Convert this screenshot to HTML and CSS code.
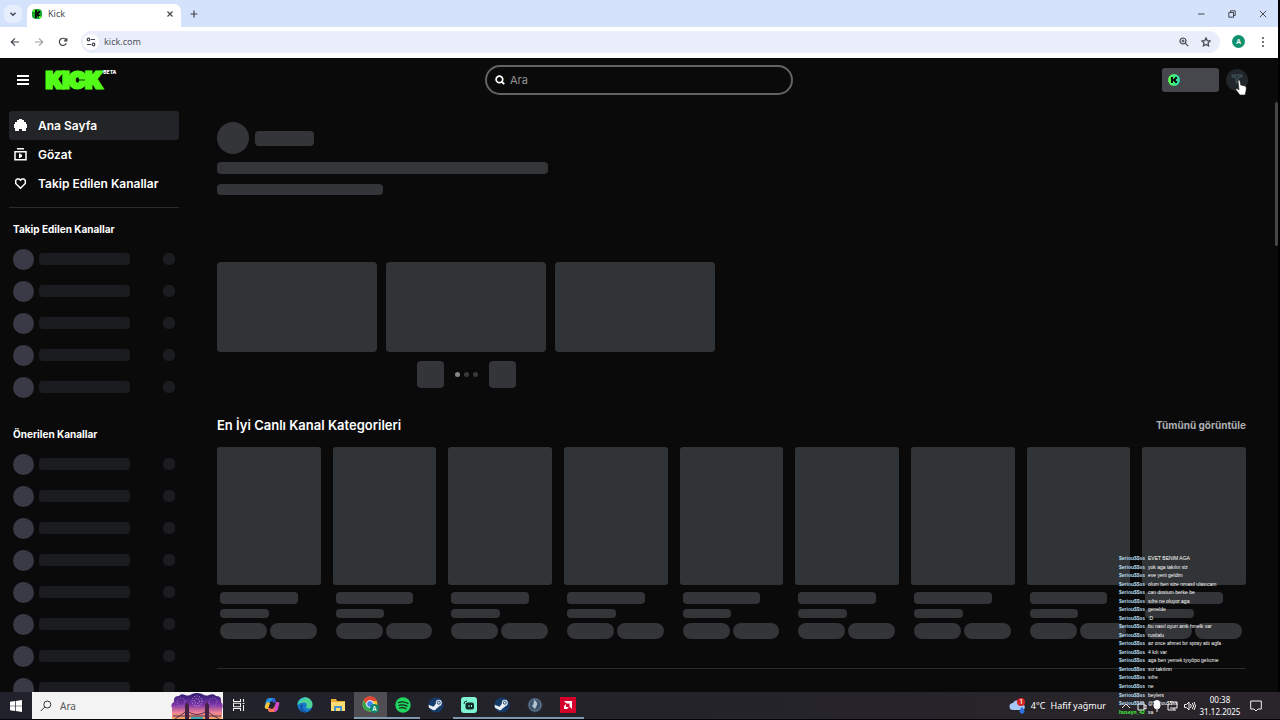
FILE: index.html
```html
<!DOCTYPE html>
<html lang="tr">
<head>
<meta charset="utf-8">
<title>Kick</title>
<link rel="stylesheet" href="styles.css">
</head>
<body>
<div class="tabstrip">
  <button class="tab-search" aria-label="Sekmelerde ara"><svg width="8" height="8" viewBox="0 0 8 8"><path d="M1.5 2.7 4 5.2 6.500 2.700" class="line bold"/></svg></button>
  <div class="tab">
    <svg width="10" height="10" viewBox="0 0 10 10"><rect width="10" height="10" rx="4" fill="#14a52c"/><path d="M3 1h2v2h1V2h2v2H7v2h1v2H6V7H5v2H3z" fill="#061208"/><path d="M1 1h2v2H1zM7 7h2v2H7z" fill="#53fc18"/></svg>
    <span class="tab-title">Kick</span>
    <button class="icon-btn tab-close" aria-label="Sekmeyi kapat"><svg width="8" height="8" viewBox="0 0 8 8"><path d="m1.500 1.500 5 5m0-5-5 5" class="line"/></svg></button>
  </div>
  <button class="icon-btn new-tab" aria-label="Yeni sekme"><svg width="8" height="8" viewBox="0 0 8 8"><path d="M4 .5v7M.5 4h7" class="line"/></svg></button>
  <div class="window-buttons">
    <button class="icon-btn" aria-label="Küçült"><svg width="8" height="8" viewBox="0 0 8 8"><path d="M1 4h6.500" class="line thin"/></svg></button>
    <button class="icon-btn" aria-label="Geri yükle"><svg width="8" height="8" viewBox="0 0 8 8"><path d="M.8 2.500h4.700v4.700H.8zM2.500 2.300V.8h4.700v4.700H5.700" class="line thin"/></svg></button>
    <button class="icon-btn" aria-label="Kapat"><svg width="8" height="8" viewBox="0 0 8 8"><path d="m.8.8 6.400 6.400m0-6.400L.8 7.200" class="line thin"/></svg></button>
  </div>
</div>
<div class="toolbar">
  <button class="icon-btn" aria-label="Geri"><svg width="10" height="10" viewBox="0 0 10 10"><path d="M9 5H1.500M5 1.300 1.300 5 5 8.700" class="line"/></svg></button>
  <button class="icon-btn faded" aria-label="İleri"><svg width="10" height="10" viewBox="0 0 10 10"><path d="M1 5h7.500M5 1.300 8.700 5 5 8.700" class="line"/></svg></button>
  <button class="icon-btn" aria-label="Yenile"><svg width="10" height="10" viewBox="0 0 10 10"><path d="M8.300 6.200A3.600 3.600 0 1 1 7.700 2.500L8.700 3.600M8.800 1v2.800H6" class="line"/></svg></button>
  <div class="address">
    <button class="site-info" aria-label="Site bilgileri"><svg width="10" height="10" viewBox="0 0 10 10"><path d="M5 2.500h4M1 7.500h4" class="line"/><circle cx="2.500" cy="2.500" r="1.300" class="line"/><circle cx="7.500" cy="7.500" r="1.300" class="line"/></svg></button>
    <input class="url" type="text" value="kick.com" aria-label="Adres">
    <button class="icon-btn" aria-label="Yakınlaştır"><svg width="10" height="10" viewBox="0 0 10 10"><circle cx="4" cy="4" r="3" class="line"/><path d="m6.200 6.200 3 3M4 2.500v3M2.500 4h3" class="line"/></svg></button>
    <button class="icon-btn" aria-label="Yer işareti"><svg width="10" height="10" viewBox="0 0 10 10"><path d="m5 .9 1.250 2.700 2.950.35-2.200 2 .6 2.950L5 7.450 2.400 8.900 3 5.950l-2.200-2 2.950-.35z" class="line"/></svg></button>
  </div>
  <button class="profile" aria-label="Profil">A</button>
  <button class="icon-btn" aria-label="Menü"><svg width="10" height="12" viewBox="0 0 10 12"><g fill="#474a4f"><circle cx="5" cy="2" r="1"/><circle cx="5" cy="6" r="1"/><circle cx="5" cy="10" r="1"/></g></svg></button>
</div>

<div class="page">
  <header class="header">
    <div class="brand">
      <button class="icon-btn" aria-label="Menü"><svg width="12" height="10" viewBox="0 0 12 10"><path d="M0 0h12v2H0zM0 4h12v2H0zM0 8h12v2H0z" fill="#fff"/></svg></button>
      <a class="logo" href="#">KICK</a><span class="beta">BETA</span>
    </div>
    <label class="search">
      <svg width="10" height="10" viewBox="0 0 10 10"><circle cx="4.400" cy="4.400" r="3.300" fill="none" stroke="#fff" stroke-width="1.700"/><path d="m6.500 6.500 2.700 2.700" stroke="#fff" stroke-width="1.800"/></svg>
      <input type="search" placeholder="Ara" aria-label="Ara">
    </label>
    <div class="account">
      <button class="wallet" aria-label="Kick cüzdanı"><svg width="12" height="12" viewBox="0 0 12 12"><defs><linearGradient id="coin"><stop offset="0" stop-color="#5bff45"/><stop offset="1" stop-color="#25d4b1"/></linearGradient></defs><circle cx="6" cy="6" r="6" fill="url(#coin)"/><path d="M3 3h2v2h1V4h1V3h2v2H8v2h1v2H7V8H6V7H5v2H3z" fill="#07100a"/></svg></button>
      <button class="avatar" aria-label="Hesap"><svg width="12" height="12" viewBox="0 0 12 12"><path d="M1 1h10v2H8l-1 2v4H5V5L4 3H1z" fill="#27363c" stroke="#48565d"/></svg></button>
    </div>
  </header>
  <div class="content">
    <nav class="sidebar">
      <a class="nav-item current" href="#"><svg width="13" height="13" viewBox="0 0 13 13"><path d="M5 0h3v1h2v2h2v2h1v4h-1v3H8v-2H5v2H1V9H0V5h1V3h2V1h2z" fill="#fff"/></svg>Ana Sayfa</a>
      <a class="nav-item" href="#"><svg width="13" height="13" viewBox="0 0 13 13"><path d="M3 .8h7" stroke="#fff" stroke-width="1.500"/><path d="M1 3.800h11v8H1z" fill="none" stroke="#fff" stroke-width="1.500"/><path d="M5 5.500h1.500v1H8v2.500H6.500v1H5z" fill="#fff"/></svg>Gözat</a>
      <a class="nav-item" href="#"><svg width="13" height="13" viewBox="0 0 13 13"><path d="M6.500 11.300 1.700 6.500V3.300L3.200 1.900h1.900l1.400 1.400 1.400-1.400h1.900l1.500 1.400v3.200z" fill="none" stroke="#fff" stroke-width="1.500"/></svg>Takip Edilen Kanallar</a>
      <hr class="rule">
      <h2 class="side-title">Takip Edilen Kanallar</h2>
      <ul class="channels">
        <li><i></i><b></b><s></s></li><li><i></i><b></b><s></s></li><li><i></i><b></b><s></s></li><li><i></i><b></b><s></s></li><li><i></i><b></b><s></s></li>
      </ul>
      <h2 class="side-title second">Önerilen Kanallar</h2>
      <ul class="channels">
        <li><i></i><b></b><s></s></li><li><i></i><b></b><s></s></li><li><i></i><b></b><s></s></li><li><i></i><b></b><s></s></li><li><i></i><b></b><s></s></li><li><i></i><b></b><s></s></li><li><i></i><b></b><s></s></li><li><i></i><b></b><s></s></li>
      </ul>
    </nav>
    <main class="main">
      <section class="featured">
        <div class="streamer"><div class="bone round"></div><div class="bone name"></div></div>
        <div class="bone headline"></div>
        <div class="bone subline"></div>
        <div class="slides"><div class="bone"></div><div class="bone"></div><div class="bone"></div></div>
        <div class="pager"><button class="bone" aria-label="Önceki"></button><span class="dots"><i class="on"></i><i></i><i></i></span><button class="bone" aria-label="Sonraki"></button></div>
      </section>
      <section>
        <div class="section-head"><h1>En İyi Canlı Kanal Kategorileri</h1><a href="#">Tümünü görüntüle</a></div>
        <div class="categories">
          <div class="category"><div class="bone cover"></div><div class="bone title"></div><div class="bone views"></div><div class="tags"><i class="bone"></i><i class="bone"></i></div></div>
          <div class="category"><div class="bone cover"></div><div class="bone title"></div><div class="bone views"></div><div class="tags"><i class="bone"></i><i class="bone"></i></div></div>
          <div class="category"><div class="bone cover"></div><div class="bone title"></div><div class="bone views"></div><div class="tags"><i class="bone"></i><i class="bone"></i></div></div>
          <div class="category"><div class="bone cover"></div><div class="bone title"></div><div class="bone views"></div><div class="tags"><i class="bone"></i><i class="bone"></i></div></div>
          <div class="category"><div class="bone cover"></div><div class="bone title"></div><div class="bone views"></div><div class="tags"><i class="bone"></i><i class="bone"></i></div></div>
          <div class="category"><div class="bone cover"></div><div class="bone title"></div><div class="bone views"></div><div class="tags"><i class="bone"></i><i class="bone"></i></div></div>
          <div class="category"><div class="bone cover"></div><div class="bone title"></div><div class="bone views"></div><div class="tags"><i class="bone"></i><i class="bone"></i></div></div>
          <div class="category"><div class="bone cover"></div><div class="bone title"></div><div class="bone views"></div><div class="tags"><i class="bone"></i><i class="bone"></i></div></div>
          <div class="category"><div class="bone cover"></div><div class="bone title"></div><div class="bone views"></div><div class="tags"><i class="bone"></i><i class="bone"></i></div></div>
        </div>
        <hr class="rule">
      </section>
    </main>
  </div>
  <div class="scroll-thumb"></div>
</div>

<div class="taskbar">
  <button class="start" aria-label="Başlat"><svg width="12" height="12" viewBox="0 0 12 12"><path d="m0 1.700 5-.7v4.700H0zM5.700.9 12 0v5.700H5.700zM0 6.300h5V11l-5-.7zM5.700 6.300H12V12l-6.300-.9z" fill="#fff"/></svg></button>
  <label class="task-search">
    <svg width="12" height="12" viewBox="0 0 12 12"><circle cx="7.300" cy="4.500" r="3.500" fill="none" stroke="#333"/><path d="M4.800 7 .8 11" stroke="#333"/></svg>
    <input type="search" placeholder="Ara" aria-label="Windows ara">
    <svg width="52" height="26" viewBox="0 0 52 26"><defs><linearGradient id="dusk" x2="0" y2="1"><stop offset="0" stop-color="#2b176b"/><stop offset=".45" stop-color="#7a36a8"/><stop offset=".75" stop-color="#ee8296"/><stop offset="1" stop-color="#f3a75c"/></linearGradient></defs><path d="M1 26V15q-2-4 2-6Q2 3 8 3q2-3 6-1 3 1 5 0 3-2 7-2t7 2q3 1 5 0 5-2 7 1 6 0 5 6 3 3 1 7v10z" fill="url(#dusk)"/><g fill="none" stroke="#dcaaf5" stroke-dasharray="1 1.500"><circle cx="26" cy="8" r="5"/><circle cx="26" cy="8" r="2.500"/><circle cx="10" cy="9" r="4" stroke="#b17ae4"/><circle cx="42" cy="9" r="4" stroke="#b17ae4"/></g><path d="M4 26 Q10 22 16 18q10 7 20 0 6 5 12 8M2 23h48" fill="none" stroke="#533152"/><path d="M14 26V12l2-3 2 3v14zM34 26V12l2-3 2 3v14z" fill="#452343"/><path d="M20 24h12v2H20z" fill="#38a5b6"/></svg>
  </label>
  <div class="apps">
    <button aria-label="Görev görünümü"><svg width="12" height="12" viewBox="0 0 12 12"><path d="M.5 0v2.500h7V0M.5 12V9.500h7V12M.5 4.300h7v3.400h-7zM10.500 0v3M10.500 6v6M9.500 4.500h2" fill="none" stroke="#eee" stroke-width="1.100"/></svg></button>
    <button aria-label="Copilot"><svg width="16" height="16" viewBox="0 0 16 16"><path d="M5 1h5q1 0 2 4L8 4Q6 4 5 8l-1 3H2q-2 0-1-3l1-4q1-3 3-3z" fill="#2494e8"/><path d="M1 9 3 5l3 1-2 6H2q-2-1-1-3z" fill="#f3c332"/><path d="M11 15H6q-2 0-2-4l4 1q2 0 3-4l1-3h2q2 0 1 3l-1 4q-1 3-3 3z" fill="#d24ac5"/><path d="m4 11 4 1q2 0 2-3l1 1-1 5H6q-2 0-2-4z" fill="#f57550"/><path d="m10 1 2 4-3 1-1-4z" fill="#3657cf"/></svg></button>
    <button aria-label="Edge"><svg width="16" height="16" viewBox="0 0 16 16"><circle cx="8" cy="8" r="7.500" fill="#1878cf"/><path d="M.5 8A7.500 7.500 0 0 1 15.500 7.500q0 4-4 4-3 0-2-2 1-4-3-4-4 0-6 2.500z" fill="#4fd394"/><path d="M.5 8A7.500 7.500 0 0 1 10 .8Q3 2 .5 8z" fill="#2bc0dc"/><path d="M6 7q-3 5 4 8-7 1-7-5 0-2 3-3z" fill="#1552a0"/></svg></button>
    <button aria-label="Dosya Gezgini"><svg width="16" height="14" viewBox="0 0 16 14"><path d="M1 1h5l1 2h8v10H1z" fill="#e9af36"/><path d="M1 4h14v9H1z" fill="#ffdc72"/><path d="M4 13V8h8v5h-2v-3H6v3z" fill="#4693ce"/></svg></button>
    <button class="open current" aria-label="Chrome"><svg width="17" height="17" viewBox="0 0 17 17"><circle cx="8" cy="8" r="7.500" fill="#f4c629"/><path d="M1.500 4.300A7.500 7.500 0 0 1 15 5H8L5 9z" fill="#e84235"/><path d="M1.500 4.300A7.500 7.500 0 0 0 8 15.500L11 10H5z" fill="#31a854"/><circle cx="8" cy="8" r="3.500" fill="#3f83ed" stroke="#fff"/><circle cx="12.500" cy="12.500" r="4.500" fill="#0b8a6c"/><text x="12.500" y="14.500" class="badge-text">A</text></svg></button>
    <button class="open" aria-label="Spotify"><svg width="16" height="16" viewBox="0 0 16 16"><circle cx="8" cy="8" r="7.700" fill="#1ed760"/><path d="M3.500 5.500q5-1.500 9.500 1M4 8.300q4-1.300 8 .8M4.500 11q3.500-1 6.500.7" fill="none" stroke="#14261a" stroke-width="1.300" stroke-linecap="round"/></svg></button>
    <button aria-label="Steam"><svg width="16" height="16" viewBox="0 0 16 16"><use href="#steam"/></svg></button>
    <button class="open" aria-label="Streamlabs"><svg width="16" height="16" viewBox="0 0 16 16"><rect width="16" height="16" rx="3" fill="#80f5d2"/><path d="M3 7q0-3 3-3" fill="none" stroke="#173d36"/><rect x="4.500" y="5.500" width="8.500" height="7" rx="2" fill="#112c28"/><path d="M8 8v2M10.500 8v2" stroke="#80f5d2"/></svg></button>
    <button class="open" aria-label="Steam"><svg width="16" height="16" viewBox="0 0 16 16"><g id="steam"><circle cx="8" cy="8" r="7.500" fill="#153b6a"/><path d="m.6 7.800 5 2L9 5h3l1 3-5 4q-1 2-3 1L.9 10.800z" fill="#e8edf4"/><circle cx="10.800" cy="5.700" r="3" fill="#e8edf4"/><circle cx="10.800" cy="5.700" r="1.500" fill="none" stroke="#244b77"/></g></svg></button>
    <button class="open" aria-label="Oyun"><svg width="16" height="16" viewBox="0 0 16 16"><circle cx="8" cy="8" r="7.500" fill="#2c3c50"/><circle cx="8" cy="8" r="6" fill="#3d5369" stroke="#71849a"/><path d="M7 3q4 2 3 5l-2 4-3-3q2-2 2-6z" fill="#b3c4d2"/></svg></button>
    <button class="open" aria-label="AMD"><svg width="16" height="16" viewBox="0 0 16 16"><path d="M0 0h16v16H0z" fill="#d4002b"/><path d="M4 4h8v8l-2.500-2.500v-3h-3zM4 9l2-2v3h3l-2 2H4z" fill="#fff"/></svg></button>
  </div>
  <div class="weather">
    <svg width="17" height="16" viewBox="0 0 17 16"><path d="M4 12a3.500 3.500 0 0 1 0-7 4.500 4.500 0 0 1 8.500 1 3 3 0 0 1 .5 6z" fill="#a7c7f7"/><path d="M13 9q5 5 0 7-5-2 0-7z" fill="#2c73df"/><circle cx="12" cy="4" r="4" fill="#d72324"/><text x="12" y="6" class="badge-text">1</text></svg>
    <span>4°C</span><span>Hafif yağmur</span>
  </div>
  <div class="tray">
    <svg width="10" height="10" viewBox="0 0 10 10"><path d="m1 7 4-4 4 4" class="tray-line"/></svg>
    <svg width="10" height="10" viewBox="0 0 10 10"><path d="M1 3h6v6H1zM3 1h4M7 5l2-1v4L7 7" class="tray-line"/></svg>
    <svg width="8" height="12" viewBox="0 0 8 12"><rect x="1" width="6" height="9" rx="3" fill="#fff"/><path d="M.8 5q0 4 3.200 4t3.200-4M4 9v3" class="tray-line"/></svg>
    <svg width="11" height="10" viewBox="0 0 11 10"><path d="M3 1h7v6H3M1 3v6h4M7 7v2M5 9h4" class="tray-line"/></svg>
    <svg width="12" height="10" viewBox="0 0 12 10"><path d="M.5 3.500h2L5 1v8L2.500 6.500h-2zM6.500 3q1.500 2 0 4M8.300 2q2.500 3 0 6M10 1q3 4 0 8" class="tray-line"/></svg>
  </div>
  <div class="clock"><time>00:38</time><time>31.12.2025</time></div>
  <button class="icon-btn notice" aria-label="Bildirimler"><svg width="12" height="12" viewBox="0 0 12 12"><path d="M.7 1h10.600v8H8l-2 2-2-2H.7z" class="tray-line"/></svg></button>
</div>

<ul class="chat">
  <li><b>$eriou$$ss</b><span>EVET BENIM AGA</span></li>
  <li><b>$eriou$$ss</b><span>yok aga takılın siz</span></li>
  <li><b>$eriou$$ss</b><span>eve yeni geldim</span></li>
  <li><b>$eriou$$ss</b><span>olum ben size nmasıl ulasıcam</span></li>
  <li><b>$eriou$$ss</b><span>can dostum berke be</span></li>
  <li><b>$eriou$$ss</b><span>sıfre ne oluyor aga</span></li>
  <li><b>$eriou$$ss</b><span>genelde</span></li>
  <li><b>$eriou$$ss</b><span>:D</span></li>
  <li><b>$eriou$$ss</b><span>bu nasıl oyun amk hmelk var</span></li>
  <li><b>$eriou$$ss</b><span>rustlalu</span></li>
  <li><b>$eriou$$ss</b><span>az once ahmet bır spray attı agfa</span></li>
  <li><b>$eriou$$ss</b><span>4 kılı var</span></li>
  <li><b>$eriou$$ss</b><span>aga ben yemek tyıyôpo gelıcme</span></li>
  <li><b>$eriou$$ss</b><span>sız takılınn</span></li>
  <li><b>$eriou$$ss</b><span>sıfre</span></li>
  <li><b>$eriou$$ss</b><span>ne</span></li>
  <li><b>$eriou$$ss</b><span>beylers</span></li>
  <li><b>$eriou$$ss</b><span>@$eriou$$ss</span></li>
  <li><b class="green">huseyn_42</b><span>sa</span></li>
</ul>
<svg class="pointer" width="12" height="17" viewBox="0 0 12 17"><path d="M3 1.500q1.500-1 2 .5l.7 4 4.300 1q1.500.5 1.300 2L11 12l-1 4H5l-4-5q-.5-1.500 1-1.500L4 11z" fill="#fff" stroke="#222" stroke-width=".6"/></svg>
</body>
</html>
```
FILE: styles.css
```css
* { box-sizing: border-box; }
body { margin: 0; height: 100vh; display: flex; flex-direction: column; overflow: hidden; background: #000; color: #fff; font-family: Inter, "Liberation Sans", sans-serif; }
button, input { font: inherit; color: inherit; border: 0; padding: 0; margin: 0; background: none; outline: 0; }
input { min-width: 0; }
ul { list-style: none; margin: 0; padding: 0; }
a { color: inherit; text-decoration: none; }
h1, h2 { margin: 0; font-weight: 600; }
svg { display: block; flex: none; }
.line { fill: none; stroke: #43474d; stroke-width: 1.2; }
.line.thin { stroke-width: 1; }
.line.bold { stroke-width: 1.500; }
.icon-btn { display: grid; place-items: center; width: 12px; height: 16px; flex: none; }
.badge-text { font: 600 6px Inter, sans-serif; fill: #fff; text-anchor: middle; }

.tabstrip { flex: none; height: 27px; display: flex; align-items: center; background: #d5e2fc; padding: 0 4px; margin-right: 2px; font-family: "Noto Sans", sans-serif; }
.tab-search { width: 18px; height: 18px; display: grid; place-items: center; border-radius: 6px; background: #e6eefe; }
.tab { align-self: flex-end; width: 154px; height: 23px; margin-left: 5px; padding: 0 5px 4px; display: flex; align-items: center; gap: 6px; background: #fff; border-radius: 7px 7px 0 0; font-size: 9px; color: #45494f; }
.tab-title { flex: 1; }
.new-tab { margin-left: 7px; }
.window-buttons { margin-left: auto; display: flex; gap: 19px; padding-right: 5px; }

.toolbar { flex: none; height: 31px; display: flex; align-items: center; gap: 12px; padding: 0 9px 2px; background: #fff; margin-right: 2px; font-family: "Noto Sans", sans-serif; }
.faded { opacity: .5; }
.address { flex: 1; height: 22px; display: flex; align-items: center; gap: 10px; padding: 0 8px 0 2px; border-radius: 11px; background: #e9eefa; }
.site-info { width: 16px; height: 16px; display: grid; place-items: center; border-radius: 50%; background: #fff; }
.url { flex: 1; margin-left: -5px; font-size: 9px; color: #50545c; }
.profile { width: 13px; height: 13px; border-radius: 50%; background: #10906d; color: #fff; font-size: 7px; font-weight: 600; line-height: 13px; }

.page { position: relative; flex: 1; min-height: 0; display: flex; flex-direction: column; overflow: hidden; background: #0a0a0b; margin-right: 2px; }
.header { flex: none; height: 44px; display: grid; grid-template-columns: 1fr 308px 1fr; align-items: center; padding: 0 30px; }
.brand { display: flex; align-items: center; margin-left: -13px; }
.logo { margin-left: 17px; font-size: 22px; line-height: 24px; font-weight: 900; color: #53fc18; -webkit-text-stroke: 3px #53fc18; }
.beta { align-self: flex-start; font-size: 5px; line-height: 8px; font-weight: 800; margin-left: 1px; }
.search { height: 30px; display: flex; align-items: center; gap: 5px; padding: 0 8px; border: 2px solid #626366; border-radius: 15px; font-size: 11px; }
.search input { flex: 1; }
.search input::placeholder { color: #929497; opacity: 1; }
.account { display: flex; justify-content: flex-end; align-items: center; gap: 7px; }
.wallet { width: 57px; height: 24px; padding-left: 6px; border-radius: 3px; background: #46474c; }
.avatar { width: 22px; height: 22px; border-radius: 50%; background: #202629; display: grid; place-items: center; }

.content { flex: 1; min-height: 0; display: flex; }
.sidebar { flex: none; width: 187px; padding: 9px 8px 0 9px; }
.nav-item { height: 29px; display: flex; align-items: center; gap: 11px; padding-left: 5px; border-radius: 3px; font-size: 12px; font-weight: 600; }
.nav-item.current { background: #232427; }
.rule { height: 1px; border: 0; margin: 0; background: #2b2c2f; }
.sidebar .rule { margin: 9px 0 12px; }
.side-title { height: 18px; padding-left: 4px; font-size: 10px; line-height: 18px; font-weight: 700; }
.side-title.second { margin-top: 22px; }
.channels { padding: 5px 4px 0; }
.channels li { height: 32px; display: flex; align-items: center; gap: 5px; }
.channels i { width: 21px; height: 21px; border-radius: 50%; background: #393a46; }
.channels b { width: 91px; height: 12px; border-radius: 4px; background: #1b1c1f; }
.channels s { width: 12px; height: 12px; margin-left: auto; border-radius: 5px; background: #1b1c1f; }

.main { flex: 1; min-width: 0; padding: 20px 32px 0 30px; }
.bone { background: #343538; border-radius: 4px; }
.featured { max-width: 498px; }
.streamer { display: flex; align-items: center; gap: 6px; }
.round { width: 32px; height: 32px; border-radius: 50%; }
.name { width: 59px; height: 15px; }
.headline { width: 331px; height: 12px; margin-top: 8px; }
.subline { width: 166px; height: 11px; margin-top: 10px; }
.slides { display: grid; grid-template-columns: repeat(3, 1fr); gap: 9px; margin-top: 67px; }
.slides .bone { aspect-ratio: 16 / 9; background: #313436; }
.pager { display: flex; justify-content: center; align-items: center; gap: 11px; margin-top: 9px; }
.pager .bone { width: 27px; height: 27px; }
.dots { display: flex; gap: 4px; }
.dots i { width: 5px; height: 5px; border-radius: 50%; background: #38393b; }
.dots .on { background: #858687; }
.section-head { display: flex; justify-content: space-between; align-items: center; height: 26px; margin: 24px 0 9px; }
.section-head h1 { font-size: 13px; }
.section-head a { font-size: 10px; font-weight: 700; color: #aeb0b4; }
.categories { display: grid; grid-template-columns: repeat(9, 1fr); gap: 12px; }
.cover { aspect-ratio: 3 / 4; border-radius: 3px; background: #313436; }
.title { width: 75%; height: 12px; margin: 7px 3px 5px; }
.views { width: 47%; height: 9px; margin: 0 3px 5px; }
.tags { display: flex; gap: 3px; padding: 0 4px 0 3px; }
.tags i { flex: 1; height: 16px; border-radius: 8px; }
.main .rule { margin-top: 29px; }
.scroll-thumb { position: absolute; right: 0; top: 44px; width: 3px; height: 144px; border-radius: 2px; background: #454648; }

.taskbar { flex: none; height: 28px; display: flex; align-items: stretch; background: linear-gradient(90deg, #20212a, #29252a); border-bottom: 1px solid #050507; font-family: "Noto Sans", sans-serif; }
.start { width: 32px; display: grid; place-items: center; }
.task-search { width: 191px; display: flex; align-items: center; gap: 8px; padding-left: 8px; background: #f3f3f4; color: #505052; font-size: 10px; }
.task-search input { flex: 1; }
.task-search input::placeholder { color: #5a5a5c; opacity: 1; }
.apps { width: 361px; display: flex; }
.apps button { flex: 1; display: grid; place-items: center; border-bottom: 2px solid transparent; background-clip: padding-box; }
.apps .open { border-bottom-color: #7e98ad; }
.apps .current { background-color: #514e53; }
.weather { margin-left: auto; display: flex; align-items: center; gap: 5px; font-size: 9px; }
.tray { display: flex; align-items: center; gap: 6px; margin-left: 15px; }
.tray-line { fill: none; stroke: #f1f1f2; stroke-width: 1; }
.clock { width: 48px; margin-right: 6px; display: flex; flex-direction: column; align-items: center; justify-content: center; font-size: 8px; line-height: 12px; }
.notice { align-self: center; margin: 0 18px 0 0; }

.chat { position: absolute; right: 0; bottom: 4px; width: 161px; height: 162px; display: flex; flex-direction: column; font-family: "Liberation Sans", Arial, sans-serif; font-size: 5px; line-height: 8px; white-space: nowrap; }
.chat li { flex: 1; display: flex; gap: 2px; }
.chat b { width: 27px; color: #b6dcef; }
.chat .green { color: #44f33b; }
.pointer { position: absolute; top: 79px; right: 33px; }
```
